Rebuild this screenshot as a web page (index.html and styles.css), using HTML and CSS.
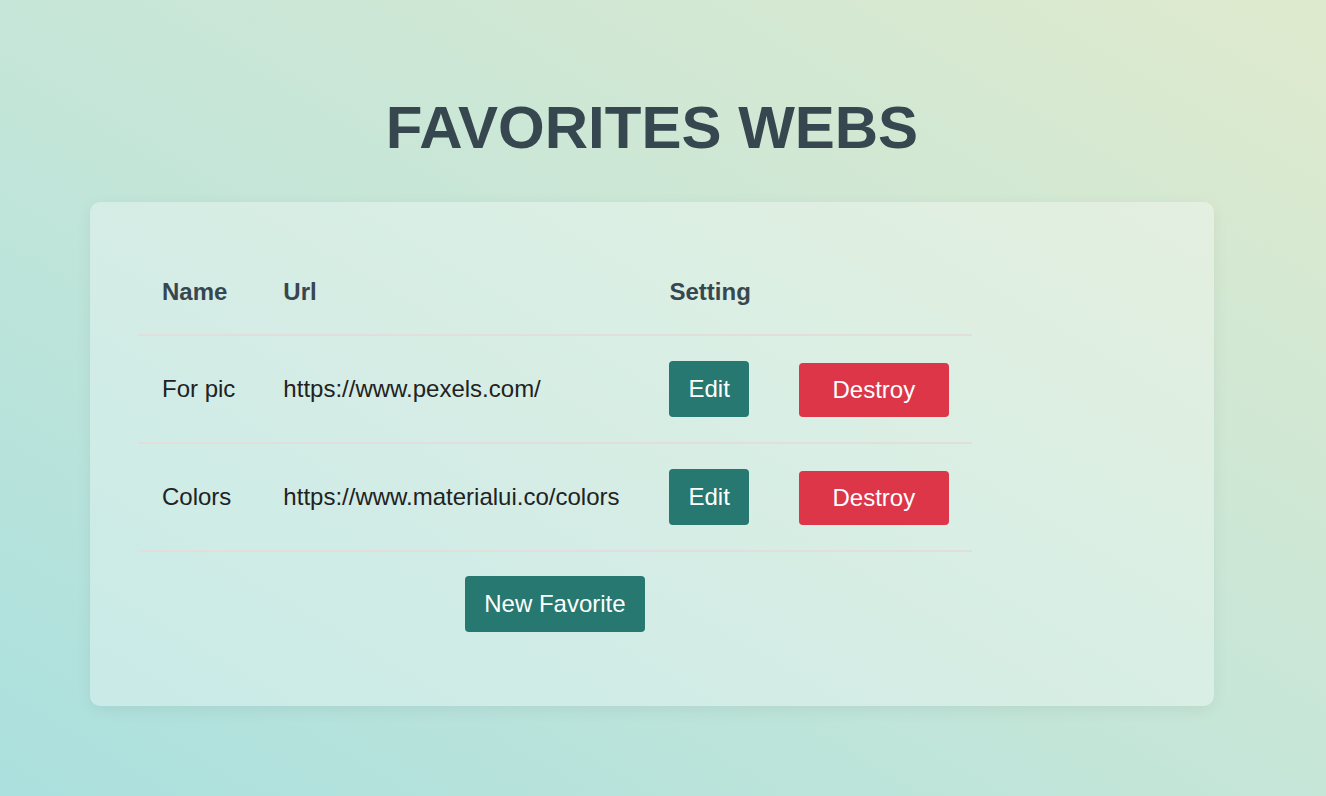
FILE: index.html
```html
<!DOCTYPE html>
<html lang="en">
<head>
  <meta charset="UTF-8">
  <meta name="viewport" content="width=device-width, initial-scale=1.0">
  <title>Favorites Webs</title>
  <link rel="stylesheet" href="styles.css">
</head>
<body>
  <div class="page">
    <h1 class="title">FAVORITES WEBS</h1>

    <div class="card">
      <div class="list">
        <table class="favorites">
          <thead>
            <tr>
              <th>Name</th>
              <th class="col-url">Url</th>
              <th colspan="2">Setting</th>
            </tr>
          </thead>
          <tbody>
            <tr>
              <td>For pic</td>
              <td class="col-url">https://www.pexels.com/</td>
              <td class="col-edit"><a href="#" class="btn btn-edit">Edit</a></td>
              <td class="col-destroy"><button class="btn btn-destroy">Destroy</button></td>
            </tr>
            <tr>
              <td>Colors</td>
              <td class="col-url">https://www.materialui.co/colors</td>
              <td class="col-edit"><a href="#" class="btn btn-edit">Edit</a></td>
              <td class="col-destroy"><button class="btn btn-destroy">Destroy</button></td>
            </tr>
          </tbody>
        </table>
        <a href="#" class="btn btn-new">New Favorite</a>
      </div>
    </div>
  </div>
</body>
</html>
```

FILE: styles.css
```css
html, body {
  margin: 0;
  padding: 0;
}

body {
  font-family: 'Liberation Sans', Arial, Helvetica, sans-serif;
  min-height: 100vh;
  background: linear-gradient(to top right, #abe0de, #c6e6d8 50%, #dfeacd);
  color: #222;
}

.page {
  padding: 93px 112px 90px 90px;
}

.title {
  margin: 0 0 40px;
  text-align: center;
  font-size: 60px;
  font-weight: bold;
  line-height: 69px;
  color: #37474f;
}

.card {
  background: rgba(255, 255, 255, 0.32);
  border-radius: 10px;
  box-shadow: 0 4px 16px rgba(0, 0, 0, 0.06);
  padding: 48px 48px 74px;
}

.list {
  display: inline-flex;
  flex-direction: column;
  align-items: center;
}

.favorites {
  border-collapse: collapse;
  font-size: 24px;
  text-align: left;
}

.favorites th {
  color: #37474f;
  font-weight: bold;
  padding: 24px;
  line-height: 36px;
  border-bottom: 2px solid #e2dedc;
}

.favorites td {
  padding: 25px 24px;
  line-height: 36px;
  vertical-align: middle;
  border-bottom: 2px solid #e2dedc;
}

.favorites .col-url {
  padding-right: 26px;
}

.favorites .col-edit {
  padding-right: 26px;
}

.favorites .col-destroy {
  padding-left: 24px;
  padding-right: 23px;
}

.btn {
  display: inline-block;
  font-family: inherit;
  font-size: 24px;
  color: #fff;
  text-decoration: none;
  border: none;
  border-radius: 4px;
  cursor: pointer;
  vertical-align: middle;
}

.btn-edit {
  background: #267870;
  padding: 10px 19px;
  line-height: 36px;
}

.btn-destroy {
  background: #dc3648;
  width: 150px;
  height: 54px;
  padding: 0;
  margin-top: 2px;
  line-height: 54px;
}

.btn-new {
  background: #267870;
  padding: 10px 19px;
  line-height: 36px;
  margin-top: 24px;
}
```
